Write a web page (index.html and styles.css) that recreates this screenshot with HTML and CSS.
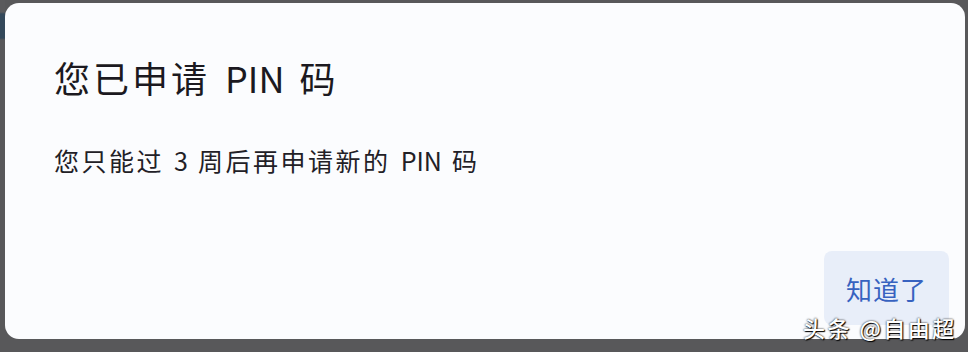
FILE: index.html
```html
<!DOCTYPE html>
<html lang="zh">
<head>
<meta charset="utf-8">
<link rel="stylesheet" href="styles.css">
</head>
<body>
<div class="screen">
  <div class="dialog">
    <h1 class="title"><span class="cjk">您已申请</span> PIN <span class="cjk">码</span></h1>
    <p class="message"><span class="cjk">您只能过</span> 3 <span class="cjk">周后再申请新的</span> PIN <span class="cjk">码</span></p>
    <div class="actions">
      <button class="btn">知道了</button>
    </div>
  </div>
  <div class="watermark">头条 @自由超</div>
</div>
</body>
</html>
```

FILE: styles.css
```css
html, body {
  margin: 0;
  padding: 0;
}
body {
  width: 968px;
  height: 352px;
  background: #58585a;
  font-family: "Noto Sans CJK SC", "Noto Sans", sans-serif;
  overflow: hidden;
}
.screen {
  position: relative;
  width: 968px;
  height: 352px;
  padding: 3px 3px 0 5px;
  box-sizing: border-box;
  background: linear-gradient(to bottom, #5a5a5c 0, #5a5a5c 12px, #33485a 14px, #33485a 38px, #58585a 40px);
  background-size: 5px 100%;
  background-repeat: no-repeat;
}
.dialog {
  background: #fbfcfe;
  border-radius: 14px;
  height: 336px;
  box-sizing: border-box;
  padding: 0 16px 0 49px;
  display: flex;
  flex-direction: column;
}
.title {
  margin: 47px 0 0 0;
  font-size: 36px;
  font-weight: 400;
  color: #1b1920;
  line-height: 54px;
  word-spacing: 7px;
}
.title .cjk {
  letter-spacing: 3px;
}
.message {
  margin: 39px 0 0 0;
  font-size: 25px;
  color: #222026;
  line-height: 34px;
  word-spacing: 4.5px;
}
.message .cjk {
  letter-spacing: 2.5px;
}
.actions {
  margin-top: auto;
  margin-bottom: 14px;
  display: flex;
  justify-content: flex-end;
}
.btn {
  border: none;
  background: #e8eef9;
  color: #3762c0;
  font-family: inherit;
  font-size: 26px;
  letter-spacing: 1px;
  border-radius: 8px;
  width: 125px;
  height: 74px;
  padding: 0;
}
.watermark {
  position: absolute;
  left: 803px;
  top: 311px;
  font-size: 22px;
  font-weight: 500;
  color: #ffffff;
  text-shadow: 0 0 2px #000, 1px 1px 1px #000;
  letter-spacing: 2.5px;
}
```
